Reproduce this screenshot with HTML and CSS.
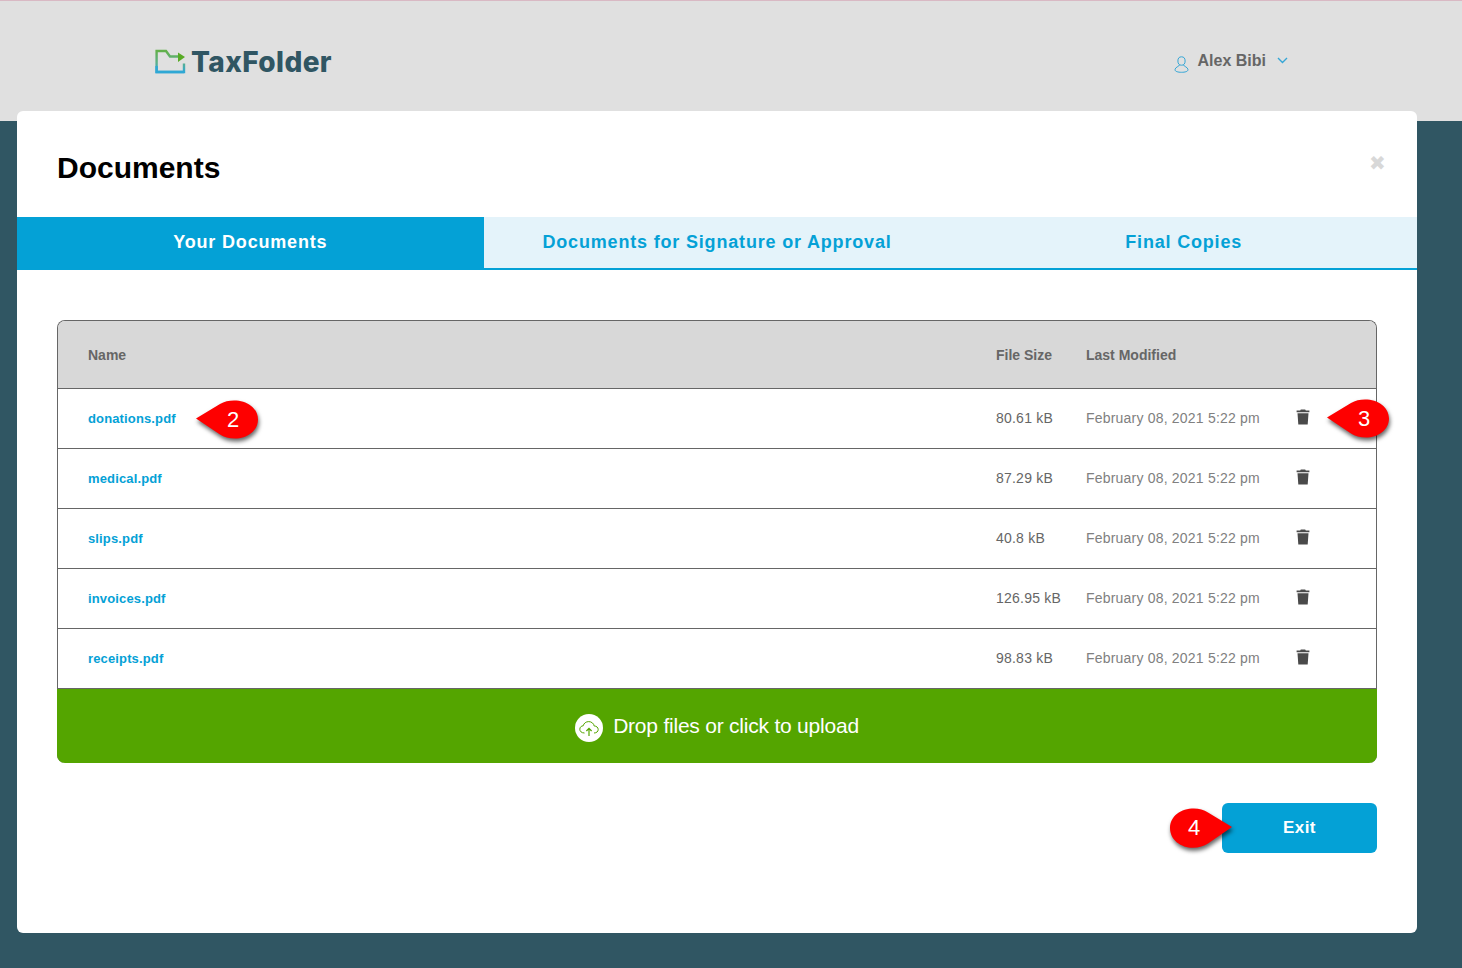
FILE: index.html
```html
<!DOCTYPE html>
<html lang="en">
<head>
    <meta charset="UTF-8">
    <title>TaxFolder - Documents</title>
    <link rel="stylesheet" href="styles.css">
</head>
<body>
    <!-- Top bar -->
    <header class="topbar">
        <div class="logo">
            <svg class="logo-icon" width="32" height="26" viewBox="0 0 32 26" fill="none">
                <defs>
                    <linearGradient id="folderGrad" x1="0" y1="0" x2="0" y2="1">
                        <stop offset="0" stop-color="#62b04a"/>
                        <stop offset="0.55" stop-color="#5cb08a"/>
                        <stop offset="1" stop-color="#2fa8d5"/>
                    </linearGradient>
                </defs>
                <path d="M29 14.5V23H1.6V2H11L15 7.5H23" stroke="url(#folderGrad)" stroke-width="2.4"/>
                <path d="M29 23H1.6V17" stroke="#2fa8d5" stroke-width="2.4"/>
                <path d="M23 3.5L30 8L23 13Z" fill="#58ab25"/>
            </svg>
            <span class="logo-text">TaxFolder</span>
        </div>
        <div class="user-menu">
            <svg class="user-icon" width="15" height="17" viewBox="0 0 15 17" fill="none" stroke="#35a6d6" stroke-width="1">
                <ellipse cx="7.5" cy="5" rx="3.6" ry="4.2"/>
                <path d="M5.4 9C5.4 10.5 1 11 1 13.7C1 15.5 4 16.3 7.5 16.3C11 16.3 14 15.5 14 13.7C14 11 9.6 10.5 9.6 9"/>
            </svg>
            <span class="user-name">Alex Bibi</span>
            <svg class="chevron" width="11" height="7" viewBox="0 0 11 7" fill="none" stroke="#35a6d6" stroke-width="1.4">
                <path d="M1 1L5.5 5.5L10 1"/>
            </svg>
        </div>
    </header>

    <!-- Documents modal -->
    <div class="modal">
        <div class="modal-header">
            <h1>Documents</h1>
            <span class="modal-close">&#10006;</span>
        </div>

        <div class="tabs">
            <div class="tab tab-active">Your Documents</div>
            <div class="tab">Documents for Signature or Approval</div>
            <div class="tab">Final Copies</div>
        </div>

        <div class="modal-body">
            <div class="doc-table">
                <div class="doc-row doc-head">
                    <div class="col-name">Name</div>
                    <div class="col-size">File Size</div>
                    <div class="col-date">Last Modified</div>
                </div>
                <div class="doc-row">
                    <div class="col-name"><a>donations.pdf</a></div>
                    <div class="col-size">80.61 kB</div>
                    <div class="col-date">February 08, 2021 5:22 pm</div>
                    <div class="col-action"><svg class="trash" viewBox="0 0 14 16"><use href="#trashIcon"/></svg></div>
                </div>
                <div class="doc-row">
                    <div class="col-name"><a>medical.pdf</a></div>
                    <div class="col-size">87.29 kB</div>
                    <div class="col-date">February 08, 2021 5:22 pm</div>
                    <div class="col-action"><svg class="trash" viewBox="0 0 14 16"><use href="#trashIcon"/></svg></div>
                </div>
                <div class="doc-row">
                    <div class="col-name"><a>slips.pdf</a></div>
                    <div class="col-size">40.8 kB</div>
                    <div class="col-date">February 08, 2021 5:22 pm</div>
                    <div class="col-action"><svg class="trash" viewBox="0 0 14 16"><use href="#trashIcon"/></svg></div>
                </div>
                <div class="doc-row">
                    <div class="col-name"><a>invoices.pdf</a></div>
                    <div class="col-size">126.95 kB</div>
                    <div class="col-date">February 08, 2021 5:22 pm</div>
                    <div class="col-action"><svg class="trash" viewBox="0 0 14 16"><use href="#trashIcon"/></svg></div>
                </div>
                <div class="doc-row">
                    <div class="col-name"><a>receipts.pdf</a></div>
                    <div class="col-size">98.83 kB</div>
                    <div class="col-date">February 08, 2021 5:22 pm</div>
                    <div class="col-action"><svg class="trash" viewBox="0 0 14 16"><use href="#trashIcon"/></svg></div>
                </div>
                <div class="upload-bar">
                    <svg class="upload-icon" width="28" height="28" viewBox="0 0 28 28" fill="none">
                        <circle cx="14" cy="14" r="14" fill="#fff"/>
                        <path d="M9.5 19C6.5 19 4.8 17.3 4.8 15.2C4.8 13.2 6.4 11.8 8.2 11.8C8.8 9.2 11 7.6 13.7 7.6C16.6 7.6 18.8 9.6 19.2 12C21.4 12 23.2 13.4 23.2 15.5C23.2 17.5 21.6 19 19 19" stroke="#54a500" stroke-width="1"/>
                        <path d="M14 22V14.5M11.4 17L14 14.3L16.6 17" stroke="#54a500" stroke-width="1.2"/>
                    </svg>
                    <span>Drop files or click to upload</span>
                </div>
            </div>

            <div class="modal-footer">
                <button class="btn-exit">Exit</button>
            </div>
        </div>
    </div>

    <!-- Numbered callouts -->
    <div class="callout callout-2">
        <svg width="62" height="40" viewBox="0 0 62 40"><path d="M0 18.5L24 4C28 1.5 33 0.5 38 0.5C51 0.5 62 8 62 19.5C62 31 51 38.5 39 38.5C33 38.5 28 37 24 34.5Z" fill="#fe0000"/></svg>
        <span>2</span>
    </div>
    <div class="callout callout-3">
        <svg width="62" height="40" viewBox="0 0 62 40"><path d="M0 18.5L24 4C28 1.5 33 0.5 38 0.5C51 0.5 62 8 62 19.5C62 31 51 38.5 39 38.5C33 38.5 28 37 24 34.5Z" fill="#fe0000"/></svg>
        <span>3</span>
    </div>
    <div class="callout callout-4">
        <svg width="62" height="40" viewBox="0 0 62 40"><path d="M62 19L38 4.5C34 2 29 0.5 24 0.5C11 0.5 0 8 0 20C0 32 11 39.8 23 39.8C29 39.8 34 38 38 35.5Z" fill="#fe0000"/></svg>
        <span>4</span>
    </div>

    <svg class="icon-defs" width="0" height="0">
        <symbol id="trashIcon" viewBox="0 0 14 16">
            <path d="M4.8 0.4H9.2L9.8 1.6H13.4V3.2H0.6V1.6H4.2ZM1.5 4.2H12.5L11.7 15.6H2.3Z" fill="#4a4a4a"/>
        </symbol>
    </svg>
</body>
</html>
```

FILE: styles.css
```css
/* General Styles */
html, body {
    height: 100%;
}

body {
    font-family: "Liberation Sans", Arial, sans-serif;
    margin: 0;
    padding: 0;
    background-color: #305663;
    overflow: hidden;
}

.icon-defs {
    position: absolute;
}

/* Top bar */
.topbar {
    display: flex;
    justify-content: space-between;
    box-sizing: border-box;
    height: 121px;
    padding: 0 174px 0 155px;
    background-color: #e0e0e0;
    border-top: 1px solid #d9b9c4;
}

.logo {
    display: flex;
    align-items: flex-start;
    padding-top: 47px;
}

.logo-icon {
    margin-top: 1px;
    margin-right: 4px;
}

.logo-text {
    font-family: "Inter", sans-serif;
    font-size: 28px;
    line-height: 28px;
    font-weight: 800;
    color: #305663;
    letter-spacing: 0.4px;
}

.user-menu {
    display: flex;
    align-items: flex-start;
    padding-top: 51px;
}

.user-icon {
    margin-top: 4px;
    margin-right: 9px;
}

.user-name {
    font-size: 16px;
    line-height: 18px;
    font-weight: bold;
    color: #666;
}

.chevron {
    margin-top: 5px;
    margin-left: 11px;
}

/* Modal */
.modal {
    position: absolute;
    left: 17px;
    top: 111px;
    width: 1400px;
    height: 822px;
    background: #fff;
    border-radius: 6px;
}

.modal-header {
    display: flex;
    justify-content: space-between;
    align-items: flex-start;
    height: 106px;
    padding: 0 31px 0 40px;
}

.modal-header h1 {
    margin: 39px 0 0;
    font-size: 30px;
    line-height: 36px;
    font-weight: bold;
    color: #000;
}

.modal-close {
    margin-top: 41px;
    font-size: 20px;
    line-height: 22px;
    color: #d8d8d8;
}

/* Tabs */
.tabs {
    display: flex;
    height: 53px;
    box-sizing: border-box;
    background-color: #e4f3fa;
    border-bottom: 2px solid #04a1d6;
}

.tab {
    flex: 1;
    font-size: 18px;
    line-height: 50px;
    font-weight: bold;
    letter-spacing: 0.82px;
    text-align: center;
    color: #04a1d6;
}

.tab-active {
    background-color: #04a1d6;
    color: #fff;
    height: 53px;
}

/* Document table */
.modal-body {
    padding: 50px 40px 0;
}

.doc-table {
    box-sizing: border-box;
    border: 1px solid #666;
    border-bottom: none;
    border-radius: 8px;
}

.doc-row {
    display: flex;
    align-items: center;
    box-sizing: border-box;
    height: 60px;
    padding-bottom: 1px;
    border-bottom: 1px solid #666;
    font-size: 14px;
    color: #666;
}

.doc-head {
    height: 68px;
    padding-bottom: 0;
    background-color: #d8d8d8;
    font-weight: bold;
    border-radius: 7px 7px 0 0;
}

.col-name {
    width: 908px;
    padding-left: 30px;
    box-sizing: border-box;
}

.col-name a {
    color: #04a1d6;
    font-size: 13px;
    font-weight: bold;
    letter-spacing: 0.14px;
}

.col-size {
    flex: 0 0 90px;
    margin-left: 30px;
    letter-spacing: 0.22px;
}

.col-date {
    width: 210px;
    color: #808080;
    letter-spacing: 0.2px;
}

.doc-head .col-size, .doc-head .col-date {
    letter-spacing: 0;
    color: #666;
}

.col-action {
    display: flex;
}

.trash {
    display: block;
    width: 14px;
    height: 16px;
    margin-top: -2px;
}

.upload-bar {
    display: flex;
    align-items: center;
    justify-content: center;
    gap: 10px;
    height: 74px;
    margin: 0 -1px;
    background-color: #54a500;
    border-radius: 0 0 8px 8px;
    font-size: 21px;
    letter-spacing: -0.22px;
    color: #fff;
}

.upload-icon {
    margin-top: 3px;
}

/* Footer */
.modal-footer {
    display: flex;
    justify-content: flex-end;
    margin-top: 40px;
}

.btn-exit {
    width: 155px;
    height: 50px;
    border: none;
    border-radius: 6px;
    background-color: #04a1d6;
    color: #fff;
    font-family: inherit;
    font-size: 17px;
    font-weight: bold;
    letter-spacing: 0.4px;
}

/* Numbered callouts */
.callout {
    position: absolute;
    width: 62px;
    height: 40px;
}

.callout svg {
    display: block;
    filter: drop-shadow(1px 3px 2px rgba(0, 0, 0, 0.6));
}

.callout span {
    position: absolute;
    top: 0;
    width: 40px;
    font-size: 22px;
    line-height: 40px;
    text-align: center;
    color: #fff;
}

.callout-2 {
    left: 196px;
    top: 400px;
}

.callout-3 {
    left: 1327px;
    top: 399px;
}

.callout-4 {
    left: 1170px;
    top: 808px;
}

.callout-2 span, .callout-3 span {
    left: 17px;
}

.callout-4 span {
    left: 4px;
}
```
